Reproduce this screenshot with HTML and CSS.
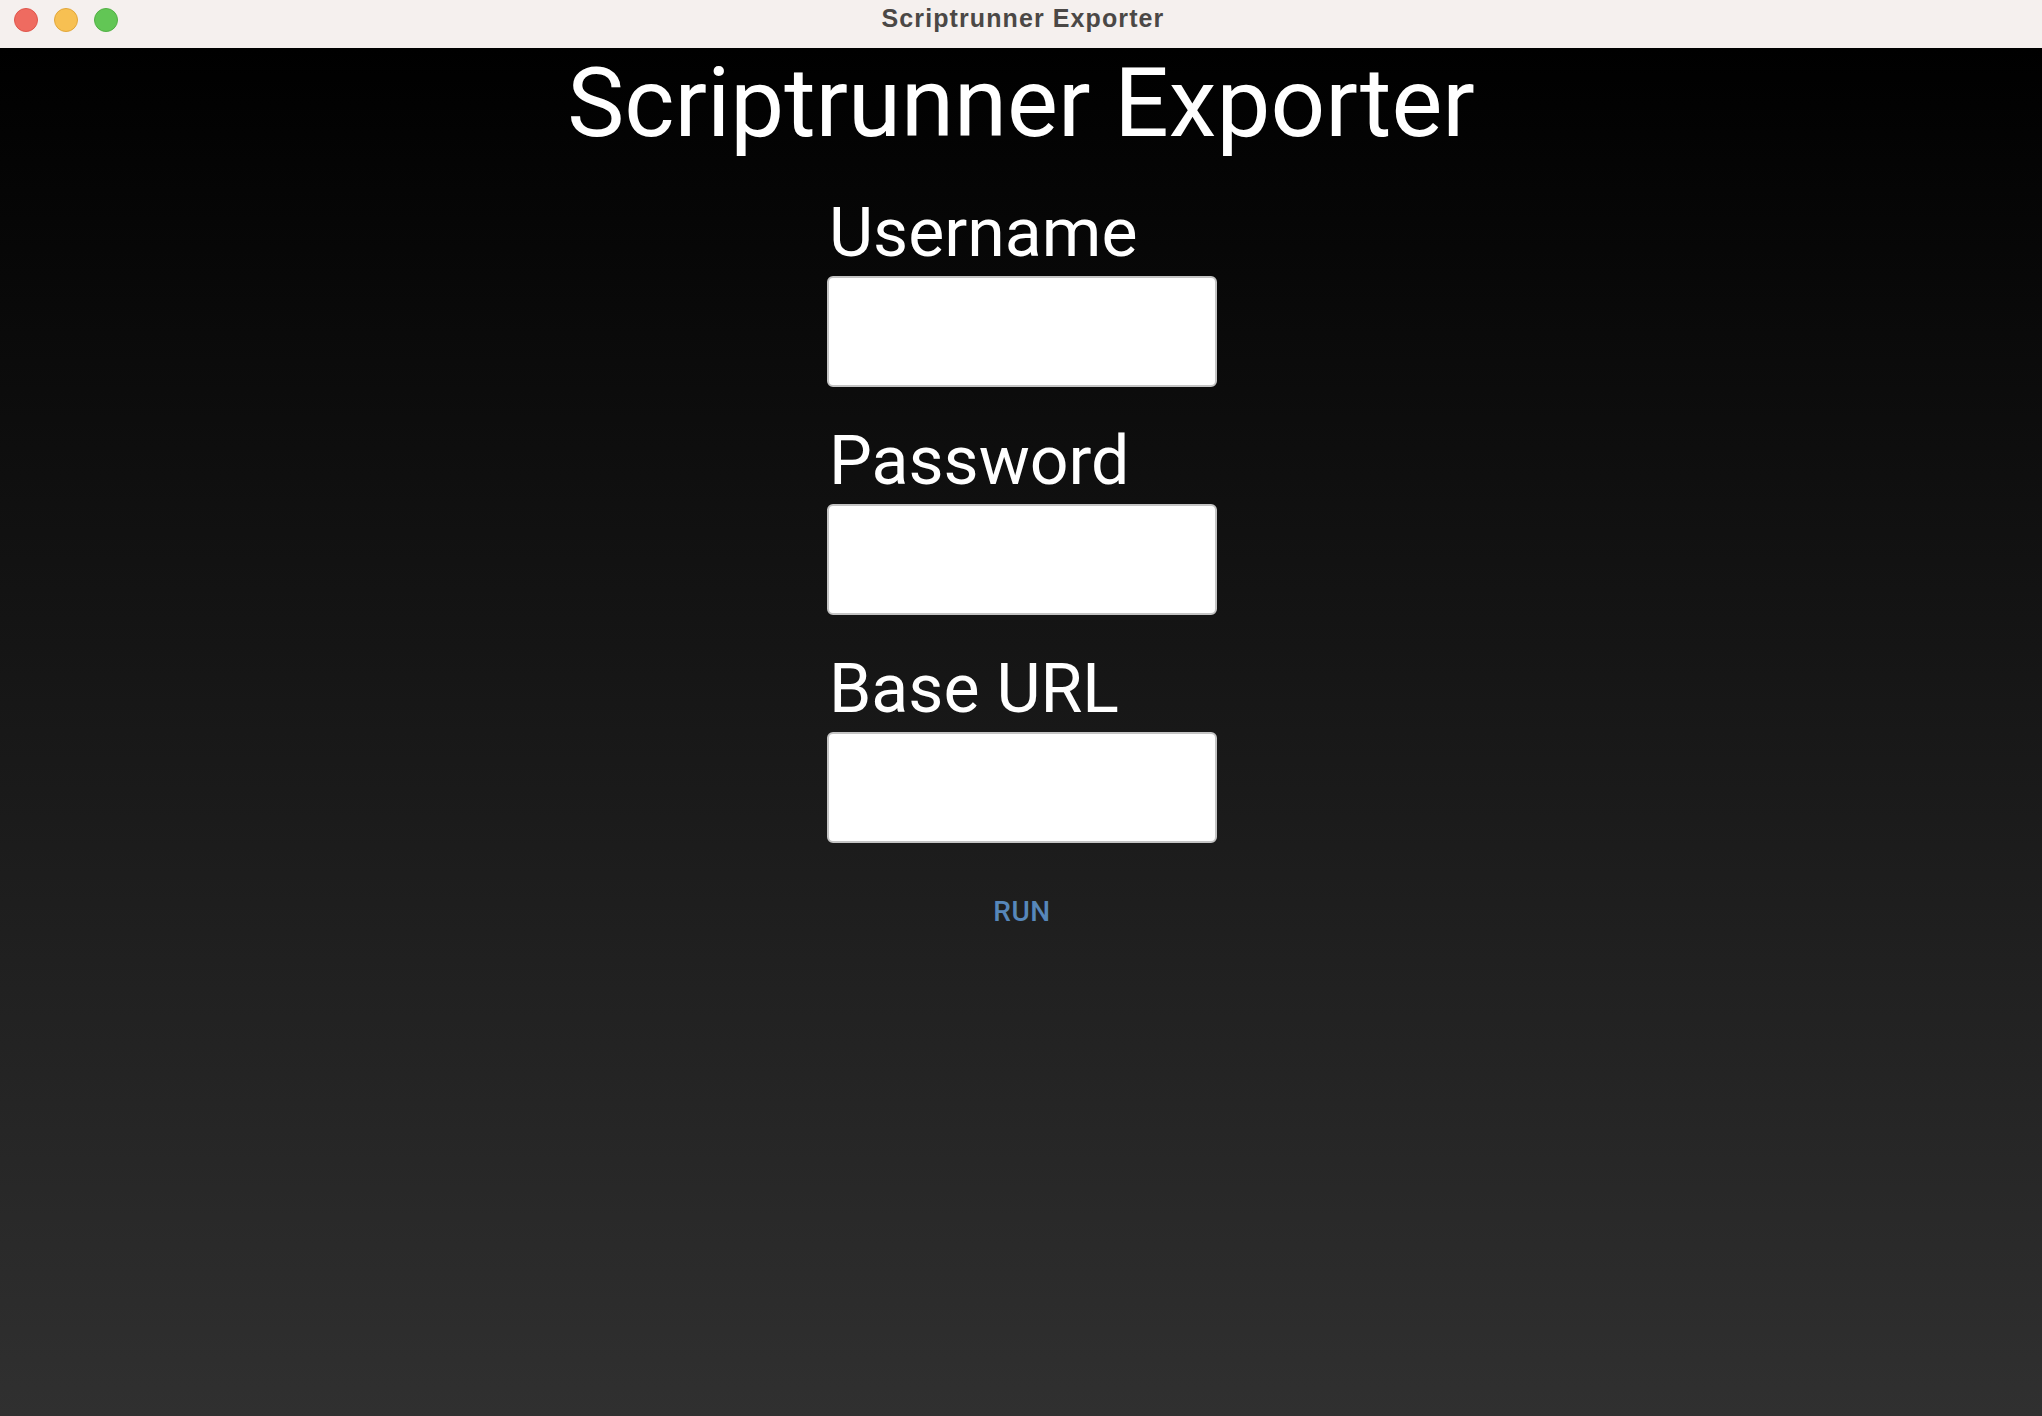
FILE: index.html
```html
<!DOCTYPE html>
<html lang="en">
<head>
<meta charset="utf-8">
<title>Scriptrunner Exporter</title>
<link rel="stylesheet" href="styles.css">
</head>
<body>
<div class="window">
  <header class="titlebar">
    <div class="lights">
      <span class="light red"></span>
      <span class="light yellow"></span>
      <span class="light green"></span>
    </div>
    <div class="wintitle">Scriptrunner Exporter</div>
  </header>
  <main class="content">
    <h1 class="heading">Scriptrunner Exporter</h1>
    <form class="form">
      <div class="field">
        <label class="label" for="u">Username</label>
        <input class="input" id="u" type="text">
      </div>
      <div class="field">
        <label class="label" for="p">Password</label>
        <input class="input" id="p" type="password">
      </div>
      <div class="field">
        <label class="label" for="b">Base URL</label>
        <input class="input" id="b" type="text">
      </div>
      <button class="run" type="button">RUN</button>
    </form>
  </main>
</div>
</body>
</html>
```

FILE: styles.css
```css
html, body {
  margin: 0;
  padding: 0;
  height: 100%;
}
body {
  font-family: Roboto, "Noto Sans", sans-serif;
  overflow: hidden;
}
.window {
  display: flex;
  flex-direction: column;
  height: 100vh;
}
.titlebar {
  height: 48px;
  flex: 0 0 48px;
  background: #f5f0ee;
  display: flex;
  align-items: center;
  justify-content: center;
  position: relative;
}
.lights {
  position: absolute;
  left: 14px;
  top: 8px;
  display: flex;
  gap: 16px;
}
.light {
  width: 24px;
  height: 24px;
  border-radius: 50%;
  box-sizing: border-box;
}
.red { background: #ef6b60; border: 1px solid #e0564c; }
.yellow { background: #f7c052; border: 1px solid #e2a73a; }
.green { background: #62c655; border: 1px solid #52b045; }
.wintitle {
  font-family: "Liberation Sans", Arial, sans-serif;
  font-weight: 700;
  font-size: 25px;
  letter-spacing: 1.1px;
  color: #4b4846;
  line-height: 1;
  padding-bottom: 11px;
  padding-left: 4px;
}
.content {
  flex: 1;
  background: linear-gradient(to bottom, #000000 0%, #303030 100%);
  display: flex;
  flex-direction: column;
  align-items: center;
  padding-top: 7px;
}
.heading {
  margin: 0;
  font-weight: 400;
  font-size: 96px;
  line-height: 96px;
  color: #ffffff;
}
.form {
  display: flex;
  flex-direction: column;
  align-items: center;
  width: 390px;
  margin-top: 48px;
  padding-left: 2px;
}
.field {
  display: flex;
  flex-direction: column;
  width: 100%;
  margin-bottom: 40px;
}
.field:last-of-type {
  margin-bottom: 55px;
}
.label {
  font-size: 68px;
  line-height: 68px;
  color: #ffffff;
  padding-left: 2px;
  margin-bottom: 9px;
}
.input {
  box-sizing: border-box;
  width: 100%;
  height: 111px;
  margin: 0;
  border: 2px solid #c4c4c4;
  border-radius: 6px;
  background: #ffffff;
  outline: none;
}
.run {
  background: none;
  border: none;
  padding: 0;
  font-family: Roboto, sans-serif;
  font-weight: 500;
  font-size: 28px;
  line-height: 28px;
  color: #5787ba;
  letter-spacing: 0.5px;
}
```
